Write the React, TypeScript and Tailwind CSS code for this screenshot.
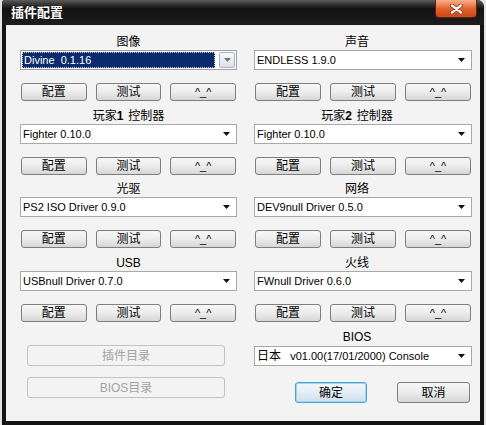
import React from 'react';

type Plugin = {
  label: React.ReactNode;
  value: string;
  focused?: boolean;
};

const rows: { left: Plugin; right: Plugin; gap: string }[] = [
  {
    left: { label: '图像', value: 'Divine  0.1.16', focused: true },
    right: { label: '声音', value: 'ENDLESS 1.9.0' },
    gap: '',
  },
  {
    left: { label: <>玩家<b className="mr-[5px]">1</b>控制器</>, value: 'Fighter 0.10.0' },
    right: { label: <>玩家<b className="mr-[5px]">2</b>控制器</>, value: 'Fighter 0.10.0' },
    gap: 'mt-[7px]',
  },
  {
    left: { label: '光驱', value: 'PS2 ISO Driver 0.9.0' },
    right: { label: '网络', value: 'DEV9null Driver 0.5.0' },
    gap: 'mt-[6px]',
  },
  {
    left: { label: 'USB', value: 'USBnull Driver 0.7.0' },
    right: { label: '火线', value: 'FWnull Driver 0.6.0' },
    gap: 'mt-[7px]',
  },
];

function Arrow({ color = '#111' }: { color?: string }) {
  return (
    <svg width="7" height="4" viewBox="0 0 7 4">
      <path d="M0 0h7L3.5 4z" fill={color} />
    </svg>
  );
}

function Label({ children, right }: { children: React.ReactNode; right?: boolean }) {
  return (
    <div className={`flex h-[16px] items-center justify-center text-[12px] leading-none ${right ? 'pr-[12px]' : ''}`}>
      {children}
    </div>
  );
}

function Select({ value, focused }: { value: string; focused?: boolean }) {
  if (focused) {
    return (
      <div className="flex h-[20px] items-stretch gap-[4px] border border-[#a0a0a0] bg-white p-[1px]">
        <div className="flex flex-1 items-center border border-dotted border-[#c8c8c8] bg-[#0b2b6c] pl-[1px] text-[11px] whitespace-pre text-white">
          {value}
        </div>
        <div className="flex w-[16px] items-center justify-center rounded-[2px] border border-[#a9b2c2] bg-linear-to-b from-[#fafafa] to-[#dde1e8]">
          <Arrow color="#6f7683" />
        </div>
      </div>
    );
  }
  return (
    <div className="flex h-[20px] items-center justify-between border border-[#a9a9a9] bg-white pr-[6px] pl-[2px] text-[11px] whitespace-pre">
      <span>{value}</span>
      <Arrow />
    </div>
  );
}

function Btn({ children }: { children: React.ReactNode }) {
  return (
    <button className="flex h-[18px] items-center justify-center rounded-[3px] border border-[#7e7e7e] bg-linear-to-b from-[#f7f7f7] via-[#ececec] to-[#d6d6d6] text-[12px] leading-none text-black">
      {children}
    </button>
  );
}

function ButtonRow() {
  return (
    <div className="mt-[13px] grid grid-cols-3 gap-[9px] px-px">
      <Btn>配置</Btn>
      <Btn>测试</Btn>
      <Btn>
        <span className="text-[11px]">^_^</span>
      </Btn>
    </div>
  );
}

function Block({ plugin, right }: { plugin: Plugin; right?: boolean }) {
  return (
    <div>
      <Label right={right}>{plugin.label}</Label>
      <Select value={plugin.value} focused={plugin.focused} />
      <ButtonRow />
    </div>
  );
}

export default function App() {
  return (
    <div className="h-[425px] w-[486px] overflow-hidden bg-[#e4e4e4] font-['Liberation_Sans','Noto_Sans_CJK_SC',sans-serif] text-black">
      <div className="ml-[2px] flex h-[425px] w-[482px] flex-col rounded-tl-[3px] rounded-tr-[7px] bg-[#141414] px-[4px] pb-[4px]">
        {/* 标题栏 */}
        <div className="-mx-[4px] flex h-[25px] shrink-0 items-start justify-between rounded-tl-[3px] rounded-tr-[7px] bg-linear-to-b from-[#5c5c5c] via-[#121212] via-35% to-[#1d1d1d] pr-[7px] pl-[9px]">
          <span className="pt-[6px] text-[13px] leading-none font-bold text-white">插件配置</span>
          <div className="flex h-[18px] w-[42px] items-center justify-center rounded-b-[4px] border border-t-0 border-[#5a2410] bg-linear-to-b from-[#f7b08a] via-[#e5612a] to-[#c9471a]">
            <svg width="13" height="10" viewBox="0 0 13 10">
              <path d="M2 1.5l9 7M11 1.5l-9 7" stroke="#7a3a1e" strokeWidth="4" strokeLinecap="round" />
              <path d="M2 1.5l9 7M11 1.5l-9 7" stroke="#f4f1ee" strokeWidth="2.4" strokeLinecap="round" />
            </svg>
          </div>
        </div>

        {/* 本体 */}
        <div className="flex-1 bg-[#f3f3f3] pt-[9px] pr-[8px] pl-[14px]">
          {rows.map((row, i) => (
            <div key={i} className={`grid grid-cols-[217px_218px] gap-x-[17px] ${row.gap}`}>
              <Block plugin={row.left} />
              <Block plugin={row.right} right />
            </div>
          ))}

          <div className="grid grid-cols-[217px_218px] gap-x-[17px]">
            <div className="pt-[23px] pr-[12px] pl-[7px]">
              <button className="flex h-[21px] w-full items-center justify-center rounded-[3px] border border-[#c2c2c2] text-[12px] text-[#a3a3a3]">
                插件目录
              </button>
              <button className="mt-[11px] flex h-[21px] w-full items-center justify-center rounded-[3px] border border-[#c2c2c2] text-[12px] text-[#a3a3a3]">
                BIOS目录
              </button>
            </div>
            <div className="pt-[7px]">
              <Label right>BIOS</Label>
              <div className="mt-px flex h-[20px] items-center justify-between border border-[#a9a9a9] bg-white pr-[6px] pl-[2px] text-[11px] whitespace-pre">
                <span>
                  <span className="text-[12px]">日本</span>   v01.00(17/01/2000) Console
                </span>
                <Arrow />
              </div>
              <div className="mt-[16px] flex gap-[30px] pl-[41px]">
                <button className="flex h-[21px] w-[72px] items-center justify-center rounded-[3px] border border-[#4f9fd0] bg-linear-to-b from-[#f2f8fc] via-[#e3eef6] to-[#cfdfeb] text-[12px] shadow-[inset_0_0_0_1px_#9fd6f2]">
                  确定
                </button>
                <button className="flex h-[21px] w-[73px] items-center justify-center rounded-[3px] border border-[#7e7e7e] bg-linear-to-b from-[#f7f7f7] via-[#ececec] to-[#d6d6d6] text-[12px]">
                  取消
                </button>
              </div>
            </div>
          </div>
        </div>
      </div>
    </div>
  );
}
